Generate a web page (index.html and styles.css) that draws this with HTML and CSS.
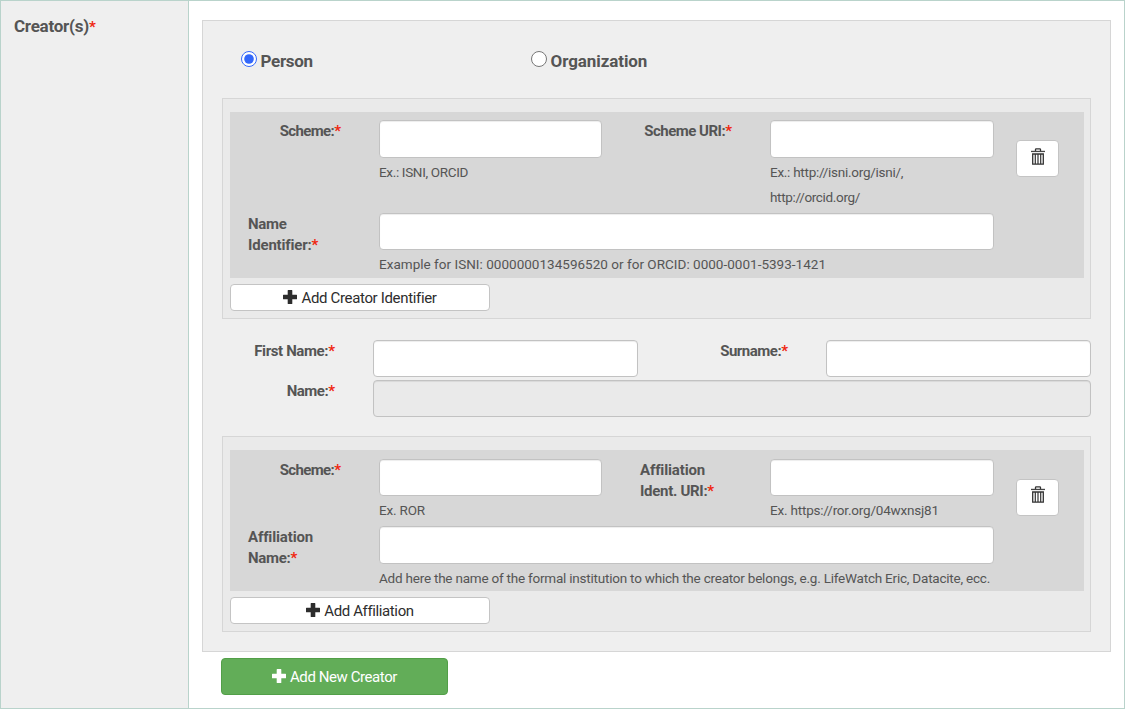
FILE: index.html
```html
<!DOCTYPE html>
<html lang="en">
<head>
<meta charset="utf-8">
<title>Creator(s)</title>
<link rel="stylesheet" href="styles.css">
</head>
<body>
<svg width="0" height="0" class="defs">
  <symbol id="plus" viewBox="0 0 14 14"><path d="M5.2 0h3.600q.5 0 .5.5v4.200h4.200q.5 0 .5.5v3.600q0 .5-.5.5H9.300v4.200q0 .5-.5.5H5.200q-.5 0-.5-.5V9.300H.5q-.5 0-.5-.5V5.200q0-.5.5-.5h4.200V.5q0-.5.5-.5z"/></symbol>
  <symbol id="trash" viewBox="0 0 14 17"><path d="M4.500 3V1.500q0-.7.7-.7h3.600q.7 0 .7.7V3" fill="none" stroke="#333" stroke-width="1.300"/><path d="M0 2.800h14v1.300H0z" fill="#444"/><path d="M1.700 6h10.600v10.200H1.700z" fill="#fff" stroke="#333" stroke-width="1.300"/><path d="M4.300 6v10M7 6v10M9.700 6v10" stroke="#333" stroke-width="1.200"/></symbol>
</svg>
<div class="page">
  <div class="side"><span class="big t-creators">Creator(s)</span><span class="req">*</span></div>
  <main class="main">
    <section class="panel">
      <div class="types">
        <label class="type"><input type="radio" name="type" checked><span class="big t-person">Person</span></label>
        <label class="type"><input type="radio" name="type"><span class="big t-org">Organization</span></label>
      </div>

      <div class="box">
        <div class="entry entry-id">
          <label class="right t-scheme">Scheme:<span class="req">*</span></label>
          <div><input class="field tall" type="text"><p class="hint t-isni">Ex.: ISNI, ORCID</p></div>
          <label class="right t-uri">Scheme URI:<span class="req">*</span></label>
          <div><input class="field tall" type="text"><p class="hint"><span class="t-http">Ex.: http://isni.org/isni/,</span><br><span class="t-orcid">http://orcid.org/</span></p></div>
          <button class="btn trash" type="button" aria-label="Remove"><svg width="14" height="17"><use href="#trash"/></svg></button>
          <label class="left"><span class="t-name">Name</span><br><span class="t-ident">Identifier:</span><span class="req">*</span></label>
          <div class="wide"><input class="field" type="text"><p class="hint t-example">Example for ISNI: 0000000134596520 or for ORCID: 0000-0001-5393-1421</p></div>
        </div>
        <button class="btn add t-addid" type="button"><svg width="14" height="14"><use href="#plus"/></svg><span>Add Creator Identifier</span></button>
      </div>

      <div class="names">
        <label class="t-first">First Name:<span class="req">*</span></label>
        <input class="field" type="text">
        <label class="t-sur">Surname:<span class="req">*</span></label>
        <input class="field" type="text">
        <label class="t-full">Name:<span class="req">*</span></label>
        <input class="field full" type="text" readonly>
      </div>

      <div class="box">
        <div class="entry entry-aff">
          <label class="right t-scheme">Scheme:<span class="req">*</span></label>
          <div><input class="field" type="text"><p class="hint t-ror">Ex. ROR</p></div>
          <label class="left second"><span class="t-aff">Affiliation</span><br><span class="t-idu">Ident. URI:</span><span class="req">*</span></label>
          <div><input class="field" type="text"><p class="hint t-rorurl">Ex. https://ror.org/04wxnsj81</p></div>
          <button class="btn trash" type="button" aria-label="Remove"><svg width="14" height="17"><use href="#trash"/></svg></button>
          <label class="left"><span class="t-aff">Affiliation</span><br><span class="t-name">Name:</span><span class="req">*</span></label>
          <div class="wide"><input class="field tall" type="text"><p class="hint t-inst">Add here the name of the formal institution to which the creator belongs, e.g. LifeWatch Eric, Datacite, ecc.</p></div>
        </div>
        <button class="btn add t-addaff" type="button"><svg width="14" height="14"><use href="#plus"/></svg><span>Add Affiliation</span></button>
      </div>
    </section>
    <button class="btn new t-new" type="button"><svg width="14" height="14"><use href="#plus"/></svg><span>Add New Creator</span></button>
  </main>
</div>
</body>
</html>
```
FILE: styles.css
```css
* { box-sizing: border-box; }
body {
  margin: 0;
  font: 15px/21px Roboto, "Liberation Sans", sans-serif;
  color: #555;
  background: #fff;
}
.defs { display: block; }
.page {
  display: flex;
  width: 1125px;
  height: 709px;
  border: 1px solid #b9d3cb;
}
.side {
  width: 188px;
  padding: 13px 0 0 13px;
  background: #efefef;
  border-right: 1px solid #b9d3cb;
}
.big { font-size: 17px; line-height: 24px; font-weight: 700; }
.req { color: #f0260f; font-weight: 700; letter-spacing: 0; }
label { font-weight: 700; }

.main { padding: 19px 13px 0; }
.panel {
  width: 909px;
  height: 632px;
  padding: 0 19px;
  background: #efefef;
  border: 1px solid #d6d6d6;
}
.types { display: flex; height: 77px; padding: 27px 0 0 19px; }
.type { display: flex; width: 290px; height: 24px; }
.type input { width: 16px; height: 16px; margin: 3px 3.500px 0 0; accent-color: #3367fa; }
.type .big { margin-top: 1px; }

.box {
  padding: 13px 6px 7px 7px;
  background: #eaeaea;
  border: 1px solid #d6d6d6;
}
.entry {
  display: grid;
  grid-template-columns: 149px 223px 168px 224px 90px;
  align-content: start;
  row-gap: 3px;
  background: #d7d7d7;
}
.entry label, .names label { padding-top: 1px; }
.entry-id { height: 166px; padding-top: 8px; }
.entry-aff { height: 141px; padding-top: 9px; }
.right { padding-right: 38px; text-align: right; }
.left { padding-left: 18px; }
.second { padding-left: 38px; }
.wide { grid-column: 2 / 5; }

.field {
  display: block;
  width: 100%;
  height: 37px;
  padding: 6px 12px;
  background: #fff;
  border: 1px solid #c2c2c2;
  border-radius: 4px;
  box-shadow: inset 0 1px 1px rgba(0, 0, 0, .075);
}
.field.tall { height: 38px; }
.field[readonly] { background: #eaeaea; }
.hint {
  margin: 2px 0 0;
  font-size: 13.5px;
  line-height: 25px;
  white-space: nowrap;
}

.btn {
  display: flex;
  align-items: center;
  justify-content: center;
  gap: 4px;
  padding: 0;
  font: 15px/21px Roboto, "Liberation Sans", sans-serif;
  color: #2d2d2d;
  fill: currentColor;
  background: #fff;
  border: 1px solid #c4c4c4;
  border-radius: 4px;
}
.btn span { line-height: 20px; }
.btn svg { margin-bottom: 1px; }
.trash { width: 43px; height: 37px; margin: 20px 0 0 22px; padding-bottom: 3px; }
.entry-aff .trash { padding-bottom: 5px; }
.add { width: 260px; height: 27px; margin-top: 6px; }
.new {
  width: 227px;
  height: 37px;
  margin: 6px 0 0 19px;
  color: #fff;
  background: #62ad58;
  border-color: #529f48;
}

.names {
  display: grid;
  grid-template-columns: 151px 265px 188px 265px;
  row-gap: 3px;
  margin: 21px 0 19px;
}
.names label { padding-right: 38px; text-align: right; }
.full { grid-column: 2 / 5; }

/* Tracking per label */
.t-creators { letter-spacing: -.25px; }
.t-person { letter-spacing: -.3px; }
.t-org { letter-spacing: -.08px; }
.t-scheme { letter-spacing: -.62px; }
.t-uri { letter-spacing: -.5px; }
.t-name { letter-spacing: -.3px; }
.t-sur { letter-spacing: -.48px; }
.t-full { letter-spacing: -.5px; }
.t-ident { letter-spacing: -.18px; }
.t-first { letter-spacing: -.38px; }
.t-aff { letter-spacing: -.15px; }
.t-idu { letter-spacing: -.3px; }
.t-addid { letter-spacing: -.34px; }
.t-addaff { letter-spacing: -.38px; }
.t-new { letter-spacing: -.42px; }
.t-isni, .t-orcid { letter-spacing: -.34px; }
.t-http { letter-spacing: -.27px; }
.t-example { letter-spacing: .02px; }
.t-ror { letter-spacing: -.17px; }
.t-rorurl { letter-spacing: -.2px; }
.t-inst { letter-spacing: -.22px; }
```
